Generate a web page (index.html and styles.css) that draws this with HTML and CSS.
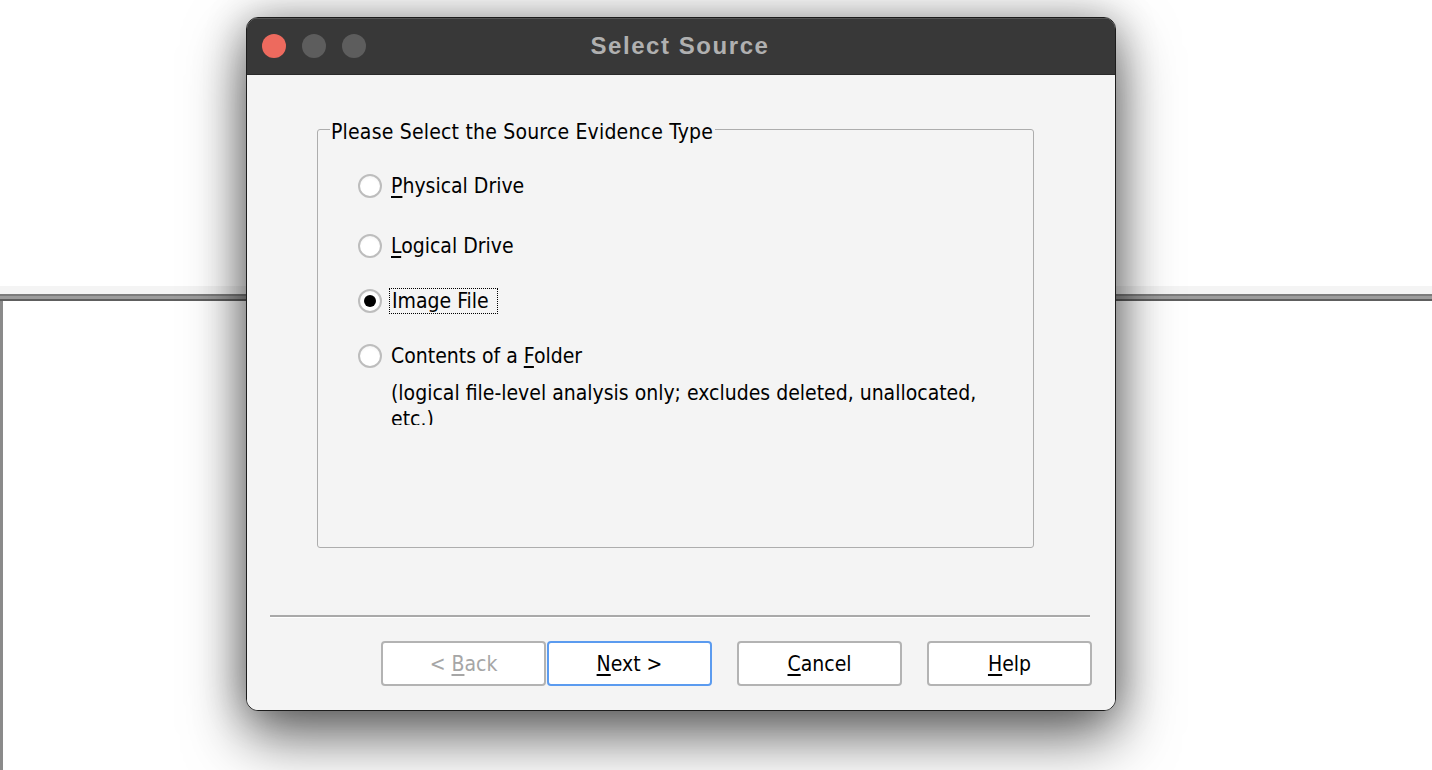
FILE: index.html
```html
<!DOCTYPE html>
<html>
<head>
<meta charset="utf-8">
<title>Select Source</title>
<link rel="stylesheet" href="styles.css">
</head>
<body>
<div class="app">
  <div class="app-top"></div>
  <div class="app-band"></div>
  <div class="app-rule"></div>
  <div class="app-pane"></div>
</div>

<div class="window">
  <div class="titlebar">
    <div class="lights">
      <span class="light light-close"></span>
      <span class="light light-min"></span>
      <span class="light light-max"></span>
    </div>
    <div class="title">Select Source</div>
    <div></div>
  </div>
  <div class="content">
    <fieldset class="group">
      <legend class="group-legend">Please Select the Source Evidence Type</legend>
      <div class="options">
        <div class="option opt-1">
          <span class="radio"></span>
          <span class="label"><u>P</u>hysical Drive</span>
        </div>
        <div class="option opt-2">
          <span class="radio"></span>
          <span class="label"><u>L</u>ogical Drive</span>
        </div>
        <div class="option opt-3">
          <span class="radio radio-on"></span>
          <span class="label focus">Image File</span>
        </div>
        <div class="option opt-4">
          <span class="radio"></span>
          <span class="label">Contents of a <u>F</u>older</span>
        </div>
        <div class="desc">(logical file-level analysis only; excludes deleted, unallocated, etc.)</div>
      </div>
    </fieldset>
    <div class="separator"></div>
    <div class="buttons">
      <button class="btn btn-disabled">&lt; <u>B</u>ack</button>
      <button class="btn btn-default"><u>N</u>ext &gt;</button>
      <button class="btn btn-gap"><u>C</u>ancel</button>
      <button class="btn btn-gap"><u>H</u>elp</button>
    </div>
  </div>
</div>
</body>
</html>
```

FILE: styles.css
```css
html, body {
  margin: 0;
  padding: 0;
}
body {
  width: 1432px;
  height: 770px;
  overflow: hidden;
  position: relative;
  background: #ffffff;
  font-family: "DejaVu Sans Condensed", "DejaVu Sans", sans-serif;
}

/* background application */
.app {
  display: flex;
  flex-direction: column;
  height: 770px;
}
.app-top {
  height: 286px;
  background: #ffffff;
}
.app-band {
  height: 8px;
  background: #f4f4f4;
}
.app-rule {
  height: 7px;
  background: linear-gradient(to bottom, #7c7c7c 0, #7c7c7c 2px, #9c9c9c 2px, #9c9c9c 5px, #5e5e5e 5px, #5e5e5e 7px);
}
.app-pane {
  flex: 1;
  background: #ffffff;
  border-left: 3px solid #8a8a8a;
}

/* dialog window */
.window {
  position: absolute;
  left: 246px;
  top: 17px;
  width: 870px;
  height: 694px;
  box-sizing: border-box;
  border: 1px solid #1c1c1c;
  border-radius: 12px;
  overflow: hidden;
  display: flex;
  flex-direction: column;
  background: #f4f4f4;
  box-shadow: 0 26px 60px rgba(0, 0, 0, 0.58), 0 0 40px rgba(0, 0, 0, 0.3);
}
.titlebar {
  height: 57px;
  flex: none;
  background: #383838;
  box-shadow: inset 0 1px 0 #555555;
  border-bottom: 1px solid #2a2a2a;
  box-sizing: border-box;
  display: grid;
  grid-template-columns: 1fr auto 1fr;
  align-items: center;
}
.lights {
  display: flex;
  gap: 16px;
  padding-left: 15px;
}
.light {
  width: 24px;
  height: 24px;
  border-radius: 50%;
  background: #5d5d5d;
}
.light-close {
  background: #ed6a5e;
}
.title {
  font-family: "Liberation Sans", Arial, sans-serif;
  font-weight: bold;
  font-size: 24px;
  letter-spacing: 1.55px;
  color: #b0b0b0;
  padding-right: 2px;
}

.content {
  flex: 1;
  display: flex;
  flex-direction: column;
  background: #f4f4f4;
  color: #000000;
  font-size: 21px;
}
u {
  text-decoration-thickness: 2px;
  text-underline-offset: 3px;
}

/* group box */
.group {
  margin: 39px 81px 0 70px;
  padding: 0;
  height: 434px;
  box-sizing: border-box;
  border: 1px solid #adadad;
  border-radius: 3px;
  min-width: 0;
}
.group-legend {
  margin-left: 12px;
  padding: 6px 2px 0 1px;
  line-height: 24px;
  letter-spacing: 0.2px;
}
.options {
  padding-left: 40px;
  padding-top: 27px;
  display: flex;
  flex-direction: column;
}
.option {
  display: flex;
  align-items: center;
  height: 30px;
}
.opt-2 { margin-top: 30px; }
.opt-3 { margin-top: 25px; }
.opt-4 { margin-top: 25px; }

.radio {
  width: 24px;
  height: 24px;
  box-sizing: border-box;
  border: 2px solid #bdbdbd;
  border-radius: 50%;
  background: radial-gradient(circle at 50% 60%, #ffffff 55%, #ececec 100%);
  display: flex;
  align-items: center;
  justify-content: center;
  flex: none;
}
.radio-on::after {
  content: "";
  width: 12px;
  height: 12px;
  border-radius: 50%;
  background: #000000;
}
.label {
  margin-left: 9px;
  line-height: 24px;
  white-space: nowrap;
}
.focus {
  margin-left: 8px;
  padding: 0 8px 0 2px;
  outline: 1px dotted #000000;
  outline-offset: 0;
  line-height: 24px;
}
.desc {
  margin-left: 33px;
  margin-top: 9px;
  width: 600px;
  line-height: 26px;
  height: 45px;
  overflow: hidden;
}

/* separator */
.separator {
  margin: 67px 25px 0 23px;
  height: 0;
  border-top: 2px solid #a9a9a9;
  border-bottom: 1px solid #ffffff;
}

/* buttons */
.buttons {
  margin: 23px 23px 0 0;
  display: flex;
  justify-content: flex-end;
}
.btn {
  width: 165px;
  height: 45px;
  box-sizing: border-box;
  border: 2px solid #b3b3b3;
  border-radius: 4px;
  background: #ffffff;
  font-family: inherit;
  font-size: 21px;
  color: #000000;
  padding: 0;
  margin: 0 0 0 1px;
}
.btn-disabled {
  color: #a6a6a6;
}
.btn-default {
  border-color: #5b9bef;
}
.btn-gap {
  margin-left: 25px;
}
```
